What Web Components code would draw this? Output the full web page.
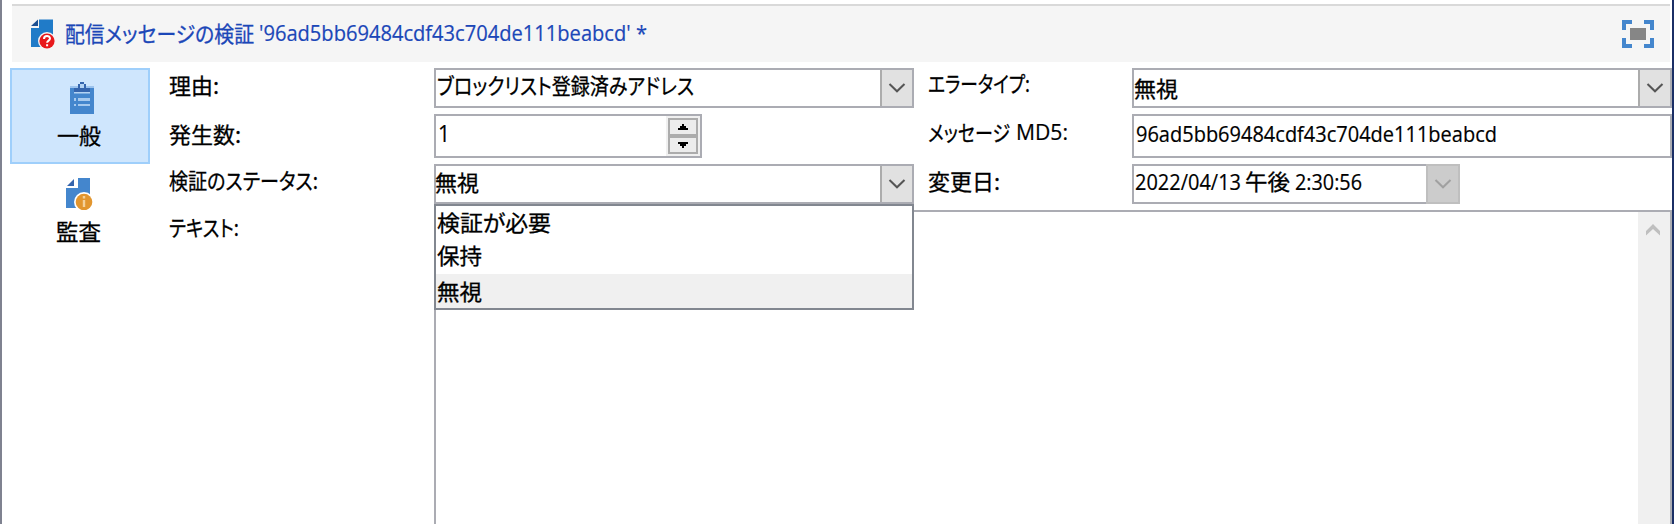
<!DOCTYPE html>
<html lang="ja">
<head>
<meta charset="utf-8">
<title>配信メッセージの検証</title>
<style>
html, body { margin: 0; height: 100%; overflow: hidden; background: #fff; }
body { font: 22px "Open Sans", "Noto Sans CJK JP", sans-serif; color: #000; }
</style>
</head>
<body>
<app-window></app-window>
<script>
const define = (name, html, ready) => customElements.define(name, class extends HTMLElement {
  constructor() {
    super();
    this.attachShadow({ mode: 'open' }).innerHTML = html;
  }
  connectedCallback() { if (ready) ready.call(this, this.shadowRoot); }
});

/* A run of text condensed or widened to an exact width. */
define('fit-text', `<style>
  :host { display: block; flex: none; height: 24px; line-height: 24px; white-space: nowrap; }
  span { display: inline-block; transform-origin: 0 50%; vertical-align: top; white-space: pre; -webkit-text-stroke: .2px currentColor; }
  :host([ja]) span { font-family: "Noto Sans CJK JP", sans-serif; font-feature-settings: "palt"; -webkit-text-stroke: .3px currentColor; }
</style><span><slot></slot></span>`, function (root) {
  const w = +this.getAttribute('w');
  this.style.width = w + 'px';
  const s = root.querySelector('span');
  const fit = () => {
    s.style.transform = 'none';
    const n = s.getBoundingClientRect().width;
    if (n) s.style.transform = 'scaleX(' + w / n + ')';
  };
  requestAnimationFrame(fit);
  document.fonts.ready.then(fit);
});

define('title-bar', `<style>
  :host { display: flex; box-sizing: border-box; height: 58px; margin: 4px 2px 0 10px; padding: 0 16px 0 18px;
          border-top: 2px solid #d9d9d9; background: #f5f5f5; color: #1b47b8; align-items: flex-start; }
  .doc { width: 26px; height: 32px; margin: 12px 9px 0 0; }
  .text { display: flex; flex: 1; padding-top: 14px; }
  .full { width: 32px; height: 28px; margin-top: 14px; }
  svg { display: block; flex: none; }
</style>
<svg class="doc" viewBox="0 0 26 32">
  <path fill="#207bc8" d="M9 1.5h14V29H1V10h8z"/><path fill="#1c4f92" d="M1 8 8 1.5V8z"/>
  <circle cx="17" cy="23" r="9" fill="#f5f5f5"/><circle cx="17" cy="23" r="7.6" fill="#e8191c"/>
  <path d="M14 21c0-4 6-3.8 6-.4 0 2-2.9 2-2.9 4.2M17.1 26.3v2" fill="none" stroke="#fff" stroke-width="2"/>
</svg>
<div class="text"><slot></slot></div>
<svg class="full" viewBox="0 0 32 28"><path d="M2 10V2h8M22 2h8v8M30 18v8h-8M10 26H2v-8" fill="none" stroke="#4486cd" stroke-width="4"/><path fill="#868686" d="M8 8h16v12H8z"/></svg>`);

define('nav-item', `<style>
  :host { display: flex; flex-direction: column; align-items: center; box-sizing: border-box; width: 140px; height: 96px;
          border: 2px solid transparent; padding: 12px 3px 0 0; }
  :host([selected]) { border-color: #9fcffb; background: #cfe6fd; }
  ::slotted(svg) { display: block; flex: none; width: 32px; height: 32px; margin: 0 -7px 8px 0; }
</style><slot name="icon"></slot><slot></slot>`);

define('form-label', `<style>:host { display: flex; padding-left: var(--x, 0); padding-top: var(--y, 0); }</style><slot></slot>`);

define('text-field', `<style>
  :host { display: flex; box-sizing: border-box; border: 2px solid #abacb3; background: #fff; padding: var(--y, 0) 0 0 var(--x, 2px); }
</style><slot></slot>`);

define('combo-box', `<style>
  :host { display: flex; box-sizing: border-box; position: relative; border: 2px solid #abacb3; background: #fff; }
  .value { display: flex; flex: 1; padding: var(--y, 0) 0 0 var(--x, 2px); }
  .btn { display: grid; place-items: center; box-sizing: border-box; width: 32px; border-left: 2px solid #acacac; background: #e1e1e1; color: #555; }
  :host([disabled]) { border-right-color: #bfbfbf; }
  :host([disabled]) .btn { width: 34px; margin: -2px -2px -2px 0; border: 2px solid #bfbfbf; background: #ccc; color: #a0a0a0; }
  svg { display: block; width: 18px; height: 12px; margin: -1px 0 0 -1px; }
</style>
<div class="value"><slot></slot></div>
<div class="btn"><svg viewBox="0 0 18 12"><path d="M1.5 2 9 9.3 16.5 2" fill="none" stroke="currentColor" stroke-width="2"/></svg></div>
<slot name="menu"></slot>`);

define('drop-list', `<style>
  :host { position: absolute; z-index: 2; left: -2px; top: 38px; box-sizing: border-box; width: 480px; height: 106px;
          border: 2px solid #828790; background: #fff; }
</style><slot></slot>`);

define('list-option', `<style>
  :host { display: flex; box-sizing: border-box; height: var(--h); padding: var(--y) 0 0 1px; }
  :host([selected]) { background: #f0f0f0; }
</style><slot></slot>`);

define('spin-box', `<style>
  :host { display: flex; box-sizing: border-box; width: 268px; border: 2px solid #abacb3; background: #fff; }
  .value { display: flex; flex: 1; padding: 5px 0 0 2px; font-size: 24px; }
  .spin { display: flex; flex-direction: column; box-sizing: border-box; width: 34px; padding: 2px; background: #f0f0f0; }
  .spin div { display: grid; place-items: center; box-sizing: border-box; width: 30px; height: 18px; border: 2px solid #acacac; background: #ececec; }
  svg { display: block; width: 10px; height: 6px; }
</style>
<div class="value"><slot></slot></div>
<div class="spin">
  <div><svg viewBox="0 0 10 6"><path d="M4 0h2v2h2v2h2v2H0V4h2V2h2z"/></svg></div>
  <div><svg viewBox="0 0 10 6"><path d="M0 0h10v2H8v2H6v2H4V4H2V2H0z"/></svg></div>
</div>`);

define('text-area', `<style>
  :host { display: flex; justify-content: flex-end; box-sizing: border-box; grid-column: span 3; border: 2px solid #abacb3; border-bottom: 0; background: #fff; }
  .bar { width: 32px; background: #f0f0f0; }
  svg { display: block; width: 14px; height: 12px; margin: 12px 0 0 8px; }
</style><div class="bar"><svg viewBox="0 0 14 12"><path d="M0 11.5V7l7-7 7 7v4.5L7 5z" fill="#bfbfbf"/></svg></div>`);

define('app-window', `<style>
  :host { display: block; box-sizing: border-box; width: 1674px; height: 524px; overflow: hidden;
          border-left: 2px solid #7f8290; border-right: 2px solid #1b2f66; background: #fff; }
  .frame { display: flex; flex-direction: column; height: 100%; }
  title-bar { flex: none; }
  .body { display: flex; flex: 1; padding: 6px 0 0 8px; }
  nav { width: 159px; }
  form { display: grid; grid-template-columns: 265px 480px 218px 540px; grid-template-rows: 40px 44px 40px 1fr; row-gap: 6px; flex: none; height: 456px; }
</style>
<div class="frame">
<title-bar>
  <fit-text ja w="189" style="margin-right:5px">配信メッセージの検証</fit-text>
  <fit-text w="388">'96ad5bb69484cdf43c704de111beabcd' *</fit-text>
</title-bar>
<div class="body">
  <nav>
    <nav-item selected>
      <svg slot="icon" viewBox="0 0 32 32"><path fill="#9dc4ee" d="M4 4h24v6H4z"/><path fill="#4486cd" d="M4 6h4v4h16V6h4v26H4z"/><path fill="#3565ad" d="M8 6h4V2h2V0h4v2h2v4h4v4H8z"/><path fill="#b4d3f3" d="M14 2h4v4h-4zM8 10h16v1.5H8z"/><path fill="#a6c9ee" d="M8 16h2v3H8zm4 0h12v3H12zM8 22h2v2H8zm4 0h12v2H12z"/></svg>
      <fit-text ja w="44">一般</fit-text>
    </nav-item>
    <nav-item>
      <svg slot="icon" viewBox="0 0 32 32"><path fill="#4486cd" d="M12 0h12v30H0V10h12z"/><path fill="#3565ad" d="M1 8 8 1v7z"/><circle cx="18" cy="24" r="10" fill="#fff"/><circle cx="18" cy="24" r="8.3" fill="#e2962f"/><path fill="#f4d19b" d="M16.8 18h2.4v2.5h-2.4zm0 4h2.4v7h-2.4z"/></svg>
      <fit-text ja w="45">監査</fit-text>
    </nav-item>
  </nav>
  <form>
    <form-label style="--y:4px"><fit-text ja w="50">理由:</fit-text></form-label>
    <combo-box style="--y:2px;--x:1px"><fit-text ja w="257">ブロックリスト登録済みアドレス</fit-text></combo-box>
    <form-label style="--x:14px;--y:2px"><fit-text ja w="102">エラータイプ:</fit-text></form-label>
    <combo-box style="--y:5px;--x:0px"><fit-text ja w="44">無視</fit-text></combo-box>

    <form-label style="--y:7px"><fit-text ja w="72">発生数:</fit-text></form-label>
    <spin-box><fit-text w="12">1</fit-text></spin-box>
    <form-label style="--x:14px;--y:5px"><fit-text ja w="82" style="margin-right:6px">メッセージ</fit-text><fit-text w="52">MD5:</fit-text></form-label>
    <text-field style="--y:5px;--x:2px"><fit-text w="361">96ad5bb69484cdf43c704de111beabcd</fit-text></text-field>

    <form-label style="--y:3px"><fit-text ja w="149">検証のステータス:</fit-text></form-label>
    <combo-box style="--y:3px;--x:0px;margin-left:0"><fit-text ja w="44" style="margin-left:-1px">無視</fit-text>
      <drop-list slot="menu">
        <list-option style="--h:34px;--y:3px"><fit-text ja w="114">検証が必要</fit-text></list-option>
        <list-option style="--h:34px;--y:2px"><fit-text ja w="45">保持</fit-text></list-option>
        <list-option selected style="--h:34px;--y:4px"><fit-text ja w="45">無視</fit-text></list-option>
      </drop-list>
    </combo-box>
    <form-label style="--x:14px;--y:4px"><fit-text ja w="72">変更日:</fit-text></form-label>
    <combo-box disabled style="--y:3px;--x:1px;width:328px"><fit-text w="106" style="margin-right:4px">2022/04/13</fit-text><fit-text ja w="45" style="margin-right:5px;margin-top:-1px">午後</fit-text><fit-text w="67">2:30:56</fit-text></combo-box>

    <form-label style="--y:4px"><fit-text ja w="70">テキスト:</fit-text></form-label>
    <text-area></text-area>
  </form>
</div>
</div>`);
</script>
</body>
</html>
